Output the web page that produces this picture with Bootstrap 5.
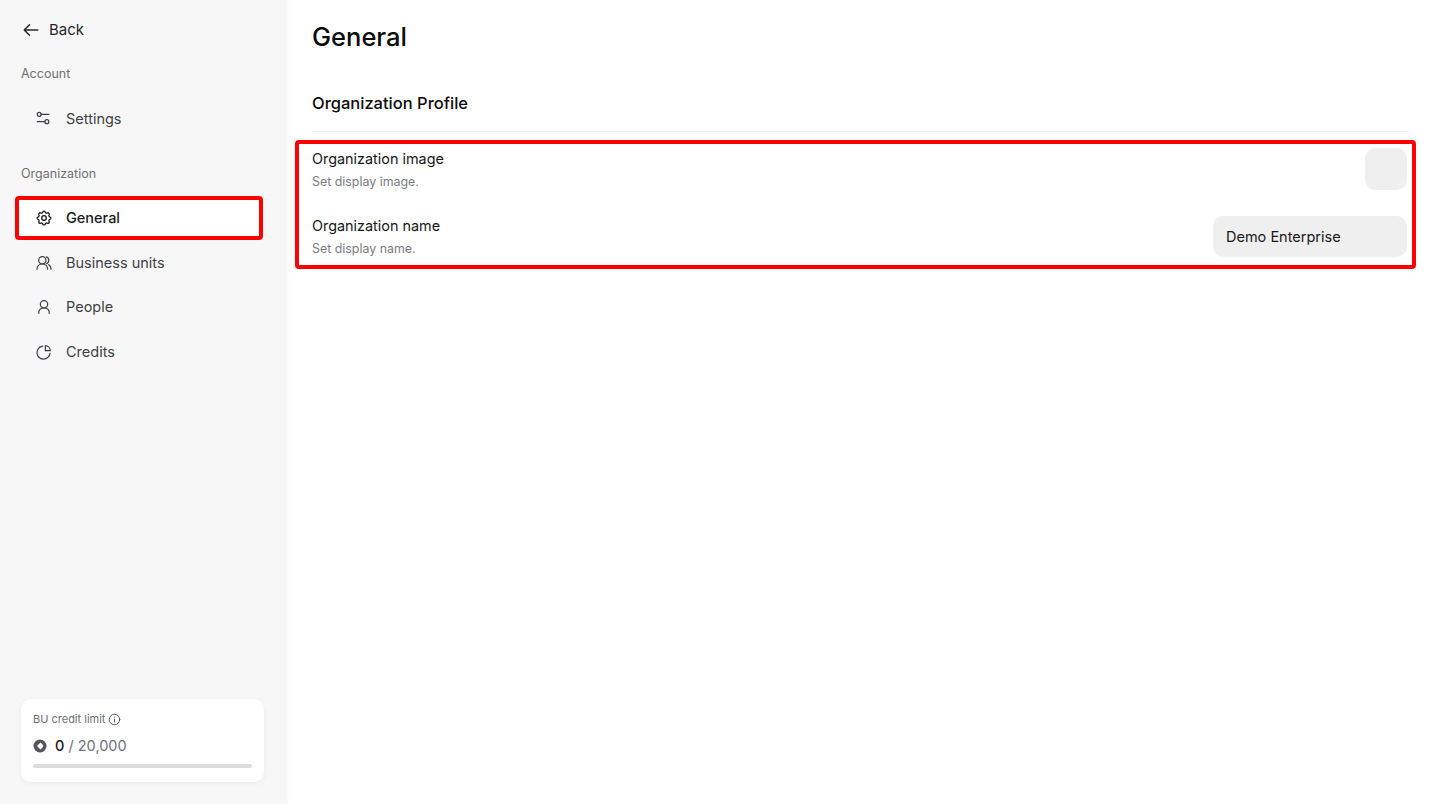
<!DOCTYPE html>
<html lang="en">
<head>
  <meta charset="UTF-8">
  <meta name="viewport" content="width=device-width, initial-scale=1.0">
  <title>General</title>
  <link href="https://cdn.jsdelivr.net/npm/bootstrap@5.3.0/dist/css/bootstrap.min.css" rel="stylesheet">
  <style>
    body { font-family: Inter, "Liberation Sans", sans-serif; color: #18181b; height: 804px; overflow: hidden; }
    .side-col { width: 287px; flex: none; height: 804px; background: #f7f7f7; padding: 0 23px 22px 21px; box-shadow: 1px 0 2px rgba(0,0,0,.03); }
    .back-link { height: 24px; margin-top: 18px; padding-left: 1px; color: #27272a; font-size: 15px; gap: 9px; text-decoration: none; }
    .group-label { font-size: 12.5px; color: #6f6f76; line-height: 16px; }
    .side-link { height: 44.5px; padding-left: 15px; gap: 14px; color: #3f3f46; font-size: 14.5px; text-decoration: none; }
    .side-link svg, .back-link svg { flex: none; }
    .side-link.on { color: #18181b; font-weight: 500; background: #fff; }
    .red-frame { border: 4px solid #f00; border-radius: 4px; }
    .nav-frame { margin: 0 1px 1px -6px; height: 44px; padding-left: 17px; gap: 14px; }
    .limit-box { background: #fff; border-radius: 10px; height: 83px; padding: 12px; box-shadow: 0 1px 6px rgba(0,0,0,.05); }
    .limit-label { font-size: 11px; color: #6f6f76; line-height: 16px; gap: 3px; }
    .limit-num { font-size: 14.5px; color: #71717a; line-height: 20px; margin-top: 9px; }
    .limit-num b { color: #18181b; font-weight: 500; }
    .limit-track { height: 4px; background: #dcdcdc; border-radius: 2px; margin-top: 8px; }
    .main-col { padding: 0 22px 0 25px; }
    .page-title { font-size: 25.5px; font-weight: 500; line-height: 32px; margin: 21px 0 0; color: #0b0b0c; }
    .section-title { font-size: 16.5px; font-weight: 500; line-height: 24px; margin: 38px 0 0; color: #0b0b0c; }
    .rule { border-top: 1px solid #eeeeee; margin-top: 16px; }
    .form-frame { margin: 8px -9px 0 -17px; height: 129px; padding: 4px 5px 0 13px; }
    .row-title { font-size: 14.4px; line-height: 20px; color: #18181b; }
    .row-sub { font-size: 12.4px; line-height: 16px; color: #7b7b82; margin-top: 5px; }
    .img-box { width: 42px; height: 42px; background: #efefef; border-radius: 10px; }
    .name-box { width: 194px; height: 41px; background: #efefef; border-radius: 10px; padding-left: 13px; font-size: 14.5px; color: #18181b; }
    .form-row-two { margin-top: 26px; }
  </style>
</head>
<body>
  <div class="d-flex">
    <!-- Sidebar -->
    <aside class="side-col d-flex flex-column">
      <a href="#" class="back-link d-flex align-items-center">
        <svg width="18" height="18" viewBox="0 0 24 24" fill="none" stroke="#27272a" stroke-width="2" stroke-linecap="round" stroke-linejoin="round"><path d="M21 12H3M10 5l-7 7 7 7"/></svg>
        Back
      </a>
      <div class="group-label" style="margin-top:24px">Account</div>
      <div style="margin-top:15px">
        <a href="#" class="side-link d-flex align-items-center">
          <svg width="16" height="16" viewBox="0 0 18 18" fill="none" stroke="#3f3f46" stroke-width="1.4" stroke-linecap="round"><circle cx="3.600" cy="3.800" r="2.200"/><circle cx="12.200" cy="12" r="2.200"/><path d="M5.800 3.800H14.500M1.500 12H10"/></svg>
          Settings
        </a>
      </div>
      <div class="group-label" style="margin-top:24px">Organization</div>
      <nav style="margin-top:14px">
        <a href="#" class="side-link on nav-frame red-frame d-flex align-items-center">
          <svg width="16" height="16" viewBox="1.500 1.500 21 21" fill="none" stroke="#18181b" stroke-width="1.700" stroke-linecap="round" stroke-linejoin="round"><circle cx="12" cy="12" r="3"/><path d="M10.300 4.300c.4-1.800 3-1.800 3.400 0a1.700 1.700 0 0 0 2.600 1.100c1.500-.9 3.300.8 2.400 2.400a1.700 1.700 0 0 0 1 2.600c1.800.4 1.800 3 0 3.400a1.700 1.700 0 0 0-1 2.600c.9 1.500-.9 3.300-2.400 2.400a1.700 1.700 0 0 0-2.600 1c-.4 1.800-3 1.800-3.400 0a1.700 1.700 0 0 0-2.600-1c-1.500.9-3.300-.9-2.400-2.400a1.700 1.700 0 0 0-1-2.600c-1.800-.4-1.800-3 0-3.400a1.700 1.700 0 0 0 1-2.600c-.9-1.600.9-3.300 2.400-2.400a1.700 1.700 0 0 0 2.600-1.100z"/></svg>
          General
        </a>
        <a href="#" class="side-link d-flex align-items-center">
          <svg width="16" height="16" viewBox="0 0 24 24" fill="none" stroke="#3f3f46" stroke-width="1.800" stroke-linecap="round" stroke-linejoin="round"><circle cx="9.500" cy="8" r="5.500"/><path d="M1.500 21.500c0-4.500 3.300-8 8-8s8 3.500 8 8M15.500 2.800a5.500 5.500 0 0 1 0 10.400M19 14.500c2.200 1.200 3.500 3.800 3.500 7"/></svg>
          Business units
        </a>
        <a href="#" class="side-link d-flex align-items-center">
          <svg width="16" height="16" viewBox="0 0 24 24" fill="none" stroke="#3f3f46" stroke-width="1.800" stroke-linecap="round" stroke-linejoin="round"><circle cx="12" cy="8" r="5.500"/><path d="M4 21.500c0-4.800 3.200-8 8-8s8 3.200 8 8"/></svg>
          People
        </a>
        <a href="#" class="side-link d-flex align-items-center">
          <svg width="16" height="16" viewBox="0 0 24 24" fill="none" stroke="#3f3f46" stroke-width="1.800" stroke-linecap="round" stroke-linejoin="round"><path d="M10 3.200A9.800 9.800 0 1 0 21 14"/><path d="M14 2.500A8 8 0 0 1 21.500 10H14z"/></svg>
          Credits
        </a>
      </nav>
      <div class="limit-box mt-auto">
        <div class="limit-label d-flex align-items-center">
          BU credit limit
          <svg width="13" height="13" viewBox="0 0 16 16" fill="none" stroke="#52525b" stroke-width="1.200" stroke-linecap="round"><circle cx="8" cy="8" r="6.500"/><path d="M8 7.500v3.500M8 5v.2"/></svg>
        </div>
        <div class="limit-num d-flex align-items-center">
          <svg class="me-2" width="14" height="14" viewBox="0 0 14 14"><circle cx="7" cy="7" r="6.500" fill="#55555b"/><path d="M7.500 3.500 4 7l3.500 3.500L10 8V6z" fill="#fff"/></svg>
          <span><b>0</b> / 20,000</span>
        </div>
        <div class="limit-track"></div>
      </div>
    </aside>

    <!-- Main -->
    <main class="main-col flex-grow-1">
      <h1 class="page-title">General</h1>
      <h2 class="section-title">Organization Profile</h2>
      <div class="rule"></div>
      <div class="form-frame red-frame">
        <div class="d-flex justify-content-between align-items-start">
          <div style="padding-top:1px">
            <div class="row-title">Organization image</div>
            <div class="row-sub">Set display image.</div>
          </div>
          <div class="img-box"></div>
        </div>
        <div class="d-flex justify-content-between align-items-start form-row-two">
          <div>
            <div class="row-title">Organization name</div>
            <div class="row-sub">Set display name.</div>
          </div>
          <div class="name-box d-flex align-items-center">Demo Enterprise</div>
        </div>
      </div>
    </main>
  </div>
  <script src="https://cdn.jsdelivr.net/npm/bootstrap@5.3.0/dist/js/bootstrap.bundle.min.js"></script>
</body>
</html>
